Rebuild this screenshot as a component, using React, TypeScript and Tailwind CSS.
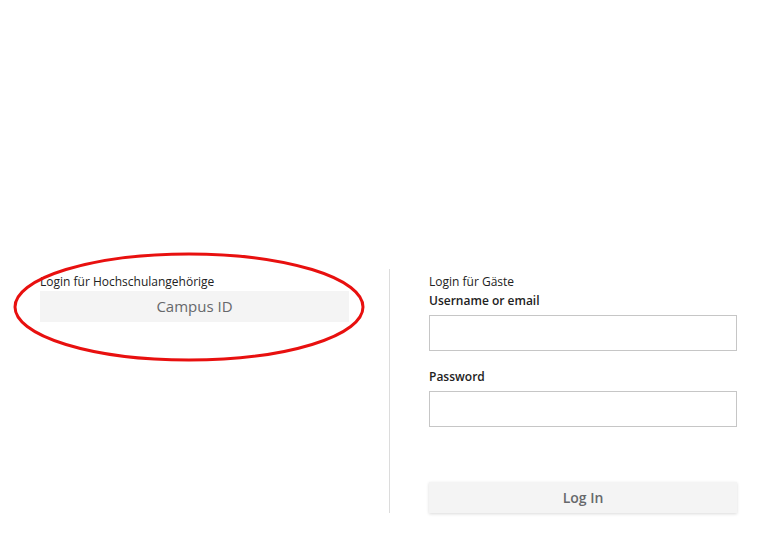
export default function App() {
  return (
    <div className="relative h-[549px] w-[777px] bg-white font-['Open_Sans',sans-serif] text-[#222]">
      <div className="flex pt-[269px] pl-[40px]">
        <div className="w-[309px] pt-[4px]">
          <div className="text-[12px] leading-[18px]">Login für Hochschulangehörige</div>
          <button className="h-[31px] w-full bg-[#f4f4f4] text-[15px] text-[#66686b]">Campus ID</button>
        </div>
        <div className="ml-[40px] mr-[39px] h-[244px] w-px bg-[#dcdcdc]" />
        <div className="w-[308px] pt-[4px]">
          <div className="text-[12px] leading-[18px]">Login für Gäste</div>
          <label className="mt-[1px] block text-[12px] font-semibold leading-[18px]">Username or email</label>
          <input className="mt-[5px] block h-[36px] w-full border border-[#c6c6c6] bg-white" />
          <label className="mt-[17px] block text-[12px] font-semibold leading-[18px]">Password</label>
          <input type="password" className="mt-[5px] block h-[36px] w-full border border-[#c6c6c6] bg-white" />
          <button className="mt-[55px] h-[31px] w-full bg-[#f4f4f4] text-[14px] font-semibold text-[#66686b] shadow-[0_1px_3px_rgba(0,0,0,0.15)]">
            Log In
          </button>
        </div>
      </div>
      <svg className="pointer-events-none absolute left-0 top-0" width="777" height="549">
        <ellipse cx="189" cy="307" rx="174" ry="53" fill="none" stroke="#e8100f" strokeWidth="3" />
      </svg>
    </div>
  );
}
